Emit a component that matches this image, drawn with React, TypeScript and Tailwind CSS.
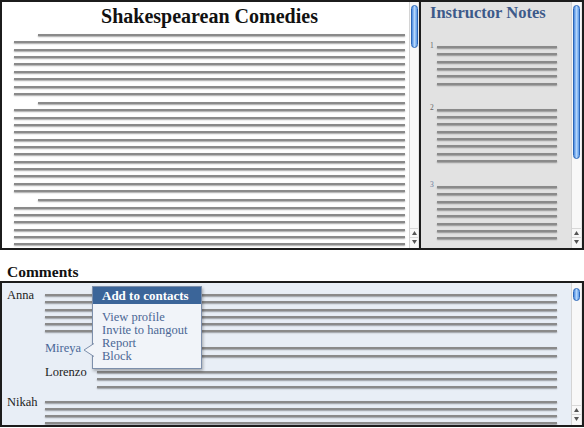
import React from "react";

const PARAS = [8, 12, 9];
const NOTES = [6, 8, 8];

function Line({ className = "" }: { className?: string }) {
  return <div className={`h-[2px] bg-[#8a8a8a] shadow-[0_1px_1.5px_rgba(0,0,0,0.35)] ${className}`} />;
}

function Lines({ count, gap }: { count: number; gap: string }) {
  return (
    <div className={`flex flex-col ${gap}`}>
      {Array.from({ length: count }).map((_, i) => (
        <Line key={i} />
      ))}
    </div>
  );
}

function Arrow({ up }: { up?: boolean }) {
  return (
    <svg width="5" height="4" viewBox="0 0 5 4">
      <path d={up ? "M2.5 0 L5 4 L0 4 Z" : "M0 0 L5 0 L2.5 4 Z"} fill="#555" />
    </svg>
  );
}

function Scrollbar({ thumb, width }: { thumb: string; width: string }) {
  return (
    <div className={`flex ${width} flex-col items-center border-x border-l-[#d4d4d4] border-r-[#e6e6e6] bg-[#f8f8f8]`}>
      <div
        className={`w-[7px] rounded-full border border-[#2c67b8] bg-gradient-to-r from-[#4a8ae0] via-[#b4d6fb] to-[#5b99e8] ${thumb}`}
      />
      <div className="flex-1" />
      <div className="flex w-full flex-col items-center pb-[2px]">
        <div className="flex h-[9px] w-full items-center justify-center border-t border-[#d8d8d8]">
          <Arrow up />
        </div>
        <div className="flex h-[9px] w-full items-center justify-center border-t border-[#d8d8d8]">
          <Arrow />
        </div>
      </div>
    </div>
  );
}

function Comment({
  name,
  lines,
  reply,
  highlight,
  className = "",
}: {
  name: string;
  lines: number;
  reply?: boolean;
  highlight?: boolean;
  className?: string;
}) {
  return (
    <div className={`flex items-start ${reply ? "pl-[38px]" : ""} ${className}`}>
      <div
        className={`${reply ? "w-[52px]" : "w-[38px]"} shrink-0 text-[12.5px] leading-[14px] ${
          highlight ? "text-[#4a6898]" : "text-[#222]"
        }`}
      >
        {name}
      </div>
      <div className="flex-1 pt-[6px]">
        <Lines count={lines} gap="gap-[5.25px]" />
      </div>
    </div>
  );
}

export default function App() {
  return (
    <div className="h-[428px] w-[584px] overflow-hidden bg-white font-['Liberation_Serif',serif]">
      <div className="flex h-[250px] border-2 border-[#1c1c1c]">
        <div className="flex w-[419px] border-r-2 border-[#1c1c1c] bg-white">
          <div className="flex-1 overflow-hidden pl-[12px] pr-[4px] pt-[2px]">
            <h1 className="text-center text-[20px] font-bold leading-[24px] text-[#111]">
              Shakespearean Comedies
            </h1>
            <div className="mt-[6px] flex flex-col gap-[7px]">
              {PARAS.map((n, i) => (
                <div key={i} className="flex flex-col gap-[5.37px]">
                  <Line className="ml-[24px]" />
                  {Array.from({ length: n }).map((_, j) => (
                    <Line key={j} />
                  ))}
                </div>
              ))}
            </div>
          </div>
          <Scrollbar width="w-[10px]" thumb="mt-[3px] h-[43px]" />
        </div>

        <div className="flex flex-1 bg-[#e2e2e2]">
          <div className="flex-1 overflow-hidden pl-[9px] pr-[14px] pt-[1px]">
            <h2 className="text-[16.5px] font-bold leading-[20px] text-[#3d5a8a]">Instructor Notes</h2>
            <div className="mt-[23px] flex flex-col gap-[24px]">
              {NOTES.map((n, i) => (
                <div key={i} className="flex items-start">
                  <div
                    className={`-mt-[4.5px] w-[7px] text-[7.5px] leading-[8px] ${
                      i === 2 ? "text-[#6b7a9c]" : "text-[#666]"
                    }`}
                  >
                    {i + 1}
                  </div>
                  <div className="flex-1">
                    <Lines count={n} gap="gap-[5.33px]" />
                  </div>
                </div>
              ))}
            </div>
          </div>
          <Scrollbar width="w-[11px]" thumb="mt-[3px] h-[154px]" />
        </div>
      </div>

      <div className="pl-[7px] pt-[13px] text-[15.5px] font-bold leading-[18px] text-[#111]">Comments</div>

      <div className="relative flex h-[146px] border-2 border-[#1c1c1c] bg-[#e8eef6]">
        <div className="flex-1 overflow-hidden pl-[5px] pr-[14px] pt-[5px]">
          <Comment name="Anna" lines={6} />
          <Comment name="Mireya" lines={2} reply highlight className="mt-[9px]" />
          <Comment name="Lorenzo" lines={3} reply className="mt-[8.5px]" />
          <Comment name="Nikah" lines={4} className="mt-[7px]" />
        </div>
        <Scrollbar width="w-[11px]" thumb="mt-[5px] h-[13px]" />

        <div className="absolute left-[90px] top-[3px] w-[110px] border border-[#7d8fab] bg-[#f1f4f9] shadow-[1px_2px_3px_rgba(0,0,0,0.3)]">
          <div className="h-[17px] bg-[#3b6599] pl-[9px] text-[13px] font-bold leading-[17px] text-white">
            Add to contacts
          </div>
          <div className="flex flex-col pb-[5px] pl-[9px] pt-[7px] text-[12.5px] leading-[13px] text-[#4b6795]">
            <span>View profile</span>
            <span>Invite to hangout</span>
            <span>Report</span>
            <span>Block</span>
          </div>
          <svg
            className="absolute left-[-10px] top-[56px]"
            width="11"
            height="14"
            viewBox="0 0 11 14"
          >
            <path d="M11 0.5 L1 7 L11 13.5" fill="#f1f4f9" stroke="#7d8fab" strokeWidth="1" />
          </svg>
        </div>
      </div>
    </div>
  );
}
